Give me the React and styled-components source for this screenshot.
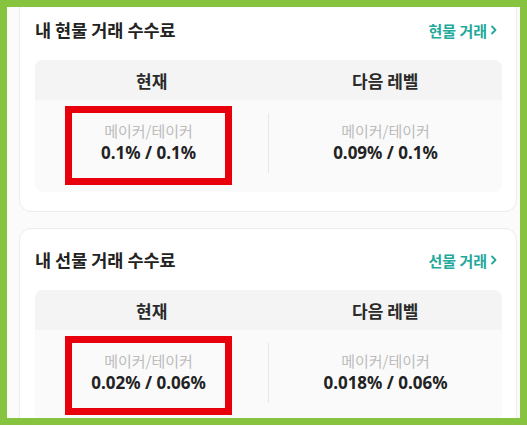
import styled, { createGlobalStyle } from 'styled-components'

const GlobalStyle = createGlobalStyle`
  html, body {
    margin: 0;
    padding: 0;
    background: #fff;
  }
  body {
    font-family: "Noto Sans", "Noto Sans CJK KR", sans-serif;
    color: #222;
  }
`

const Frame = styled.div`
  box-sizing: border-box;
  width: 527px;
  height: 425px;
  border: 7px solid #86c440;
  background: #fbfbfb;
  overflow: hidden;
`

const List = styled.div`
  display: flex;
  flex-direction: column;
  gap: 16px;
  margin-top: -9px;
  padding: 0 3px 0 12px;
`

const Card = styled.section`
  box-sizing: border-box;
  background: #fff;
  border: 1px solid #ececec;
  border-radius: 12px;
  padding: 19px 14px 19px 15px;
`

const CardHead = styled.div`
  display: flex;
  align-items: center;
  justify-content: space-between;
  height: 24px;
  margin-bottom: 18px;
`

const Title = styled.h3`
  margin: 0;
  font-family: "Noto Sans CJK KR", sans-serif;
  font-size: 17.5px;
  line-height: 24px;
  font-weight: 700;
  color: #222;
`

const Link = styled.a`
  display: flex;
  align-items: center;
  gap: 3px;
  margin-right: 4px;
  font-family: "Noto Sans CJK KR", sans-serif;
  font-size: 15px;
  font-weight: 700;
  color: #23a89c;
  text-decoration: none;
  svg {
    width: 8px;
    height: 10px;
  }
`

const Table = styled.div`
  border-radius: 8px;
  overflow: hidden;
  background: #fafafa;
`

const HeadRow = styled.div`
  display: grid;
  grid-template-columns: 1fr 1fr;
  height: 40px;
  background: #f4f4f4;
`

const HeadCell = styled.div`
  display: flex;
  align-items: center;
  justify-content: center;
  font-family: "Noto Sans CJK KR", sans-serif;
  font-size: 17px;
  font-weight: 700;
  color: #2a2a2a;
`

const BodyRow = styled.div`
  display: grid;
  grid-template-columns: 1fr 1px 1fr;
  align-items: center;
  height: 92px;
`

const Divider = styled.div`
  width: 1px;
  height: 60px;
  margin-top: -7px;
  background: #e8e8e8;
`

const Cell = styled.div`
  display: flex;
  justify-content: center;
`

const Highlight = styled.div`
  box-sizing: border-box;
  width: 167px;
  height: 79px;
  margin-top: -1px;
  margin-left: ${p => p.marked ? -6 : 0}px;
  border: 7px solid ${p => p.marked ? '#e8000d' : 'transparent'};
  padding-top: 9px;
  display: flex;
  flex-direction: column;
  align-items: center;
`

const Label = styled.div`
  font-family: "Noto Sans CJK KR", sans-serif;
  font-size: 15px;
  line-height: 18px;
  color: #bcbcbc;
`

const Value = styled.div`
  margin-top: 2px;
  font-size: 17px;
  line-height: 22px;
  font-weight: 700;
  color: #222;
`

const Chevron = () => (
  <svg viewBox="0 0 8 10" fill="none">
    <path d="M2 1.5 L5.5 5 L2 8.5" stroke="currentColor" strokeWidth="1.8" strokeLinecap="round" strokeLinejoin="round" />
  </svg>
)

const fees = [
  { title: '내 현물 거래 수수료', link: '현물 거래', now: '0.1% / 0.1%', next: '0.09% / 0.1%' },
  { title: '내 선물 거래 수수료', link: '선물 거래', now: '0.02% / 0.06%', next: '0.018% / 0.06%' },
]

function FeeCard({ fee }) {
  return (
    <Card>
      <CardHead>
        <Title>{fee.title}</Title>
        <Link href="#">{fee.link}<Chevron /></Link>
      </CardHead>
      <Table>
        <HeadRow>
          <HeadCell>현재</HeadCell>
          <HeadCell>다음 레벨</HeadCell>
        </HeadRow>
        <BodyRow>
          <Cell>
            <Highlight marked>
              <Label>메이커/테이커</Label>
              <Value>{fee.now}</Value>
            </Highlight>
          </Cell>
          <Divider />
          <Cell>
            <Highlight>
              <Label>메이커/테이커</Label>
              <Value>{fee.next}</Value>
            </Highlight>
          </Cell>
        </BodyRow>
      </Table>
    </Card>
  )
}

export default function App() {
  return (
    <>
      <GlobalStyle />
      <Frame>
        <List>
          {fees.map(fee => <FeeCard key={fee.title} fee={fee} />)}
        </List>
      </Frame>
    </>
  )
}
